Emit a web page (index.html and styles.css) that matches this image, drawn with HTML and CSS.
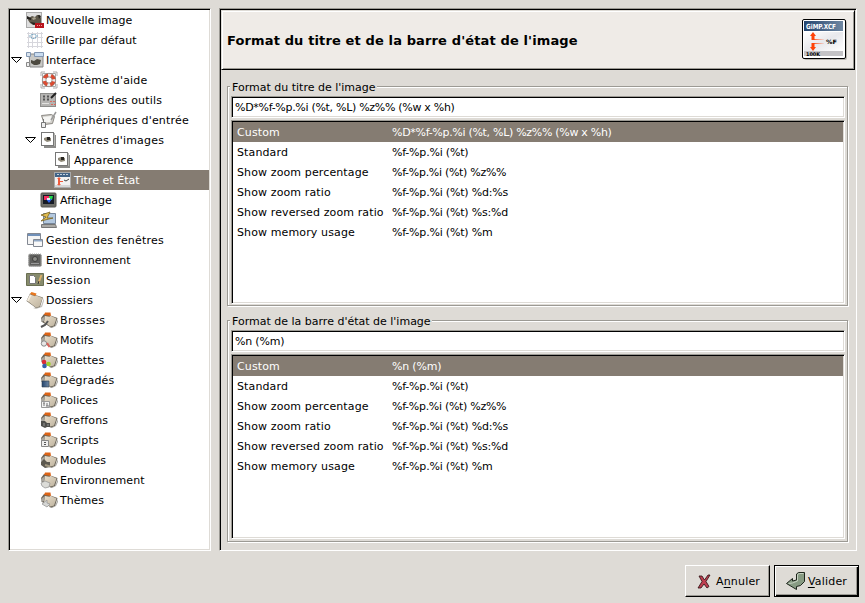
FILE: index.html
```html
<!DOCTYPE html>
<html lang="fr">
<head>
<meta charset="utf-8">
<title>Préférences</title>
<link rel="stylesheet" href="styles.css">
</head>
<body>
<svg class="defs" aria-hidden="true">
  <defs>
    <linearGradient id="paper" x1="0" y1="0" x2="1" y2="1"><stop offset="0" stop-color="#e9dfcc"/><stop offset="1" stop-color="#bdb29e"/></linearGradient>
    <linearGradient id="bar" x1="0" y1="0" x2="1" y2="0"><stop offset="0" stop-color="#24456f"/><stop offset="1" stop-color="#6f87a2"/></linearGradient>
    <linearGradient id="glass" x1="0" y1="0" x2="1" y2="1"><stop offset="0" stop-color="#fff"/><stop offset=".5" stop-color="#e8e8ec"/><stop offset="1" stop-color="#fff"/></linearGradient>
    <linearGradient id="fade" x1="0" y1="0" x2="1" y2="0"><stop offset="0" stop-color="#ff4208"/><stop offset="1" stop-color="#ff4208" stop-opacity=".1"/></linearGradient>
    <symbol id="folder" viewBox="0 0 18 18">
      <path d="M7 17l8-2 3-8v3l-2 6-6 2z" fill="#8a867e" opacity=".5"/>
      <path d="M.5 10L4 2.500l4 1 9 3-3 9.500-4 1z" fill="#7c7567"/>
      <path d="M4 3l1.500-2 5 1.500-1 2.500z" fill="#e8781f"/>
      <path d="M1 9.500L4 3.500l5 1.700 1-.7 6.500 2.500-3 8.500-3.500 1z" fill="url(#paper)"/>
      <path d="M1 9.500L4 3.500l1.500.7-3 6z" fill="#f6efe2"/>
    </symbol>
    <symbol id="sub" viewBox="0 0 18 18">
      <path d="M9 17l6-2 3-7v3l-2 4-4 2z" fill="#77736c" opacity=".6"/>
      <path d="M1 7l3-4 5 1 8.500 3L15 15l-4 1.500L2 11z" fill="#6a6458"/>
      <path d="M4 4l1-2.500 5.500 0 .5 3.500z" fill="#dd6417"/>
      <path d="M5 5l4.500.8 1-1 6 2.700-2.500 7-3.500 1L4 11z" fill="url(#paper)"/>
      <path d="M1.500 7.500L5 5l-1 5-3 1z" fill="#a9a69f"/>
    </symbol>
    <symbol id="wilber" viewBox="0 0 18 18">
      <rect x=".5" y="1.500" width="15" height="15" fill="#dedede" stroke="#aaa"/>
      <path d="M3 7l3-2 3 1 2-2h3l1 3v5l-3 2H7l-3-2-2-3z" fill="#5d5749"/>
      <path d="M1 5l4 2v2L1 8zM12 4l3 1-2 3zM4 11l6 1-2 2z" fill="#25231f"/><path d="M6 7l3-1 1 2-3 1z" fill="#a9a28f"/>
    </symbol>
    <symbol id="images" viewBox="0 0 18 18">
      <path d="M4 4h12v13H4z" fill="#8b8b89"/><path d="M3 2h12v13H3z" fill="#b5b5b1"/>
      <rect x="1.500" y="1.500" width="12" height="13" fill="#fff" stroke="#777"/>
      <path d="M4 7l3-1 4 1v3L7 11 4 9z" fill="#8e8878"/><path d="M7 6h3v3H7z" fill="#282622"/>
    </symbol>
    <symbol id="titre" viewBox="0 0 18 18">
      <rect x=".5" y="1.500" width="16" height="15" fill="#f2f2f2" stroke="#aaa"/>
      <path d="M1 2h15v4H1z" fill="#426487"/><path d="M3 3.500h2m1 0h2m1 0h2m1 0h2" stroke="#c3d0dd"/>
      <path d="M5 6l2 2H6v2h3v1H6v2h1l-2 2-2-2h1V8H3z" fill="#ef5a3b"/><path d="M10 9l2 1 3-2" stroke="#444" fill="none"/><path d="M1 15h15" stroke="#bbb"/>
    </symbol>
  </defs>
</svg>
<main class="dialog">
  <div class="content">
    <nav class="tree">
      <div class="row l1"><svg class="icon" viewBox="0 0 18 18"><use href="#wilber"/><path d="M9 12h9v5H9z" fill="#b8141c"/><path d="M11 14.500h5" stroke="#f19a9a" stroke-dasharray="1 1"/></svg><span>Nouvelle image</span></div>
      <div class="row l1"><svg class="icon" viewBox="0 0 18 18"><path d="M1 2.500h16M1 6.500h16M1 11.500h16M1 15.500h16M2.500 1v16M6.500 1v16M11.500 1v16M15.500 1v16" stroke="#d6d6dc" fill="none"/><path d="M5.500 3.500h4v4h-4zM4 4v3M11 4v3" fill="none" stroke="#7fa9c2" stroke-dasharray="2 1"/></svg><span>Grille par défaut</span></div>
      <div class="row l1"><i class="arrow"><svg viewBox="0 0 11 7"><path d="M.5.500h10L5.500 5.500z"/></svg></i><svg class="icon" viewBox="0 0 18 18"><path d="M3 3h14v13H4z" fill="#c8c8c5" stroke="#888"/><path d="M8.500 1.500h9v4h-9z" fill="#c9dcf0" stroke="#8196b2"/><path d="M.5 1.500h4v4h-4z" fill="#dae4ee" stroke="#8196b2"/><path d="M5 9l3 1 3-2 4 1-1 4-3 1H8l-3-2z" fill="#4d4a40"/><path d="M.5 11.500h3v4h-3z" fill="#eee" stroke="#888"/></svg><span>Interface</span></div>
      <div class="row l2 wide"><svg class="icon" viewBox="0 0 18 18"><path d="M2.500 2.500h13v13h-13z" fill="none" stroke="#aaa"/><circle cx="9" cy="9" r="4.900" fill="none" stroke="#eee" stroke-width="3.600"/><circle cx="9" cy="9" r="4.900" fill="none" stroke="#dd4a30" stroke-width="3.600" stroke-dasharray="4.700 3" stroke-dashoffset="-1.500"/><path d="M1 1h4M1 1v4M13 1h4v4M1 13v4h4M13 17h4v-4" fill="none" stroke="#999" stroke-width=".8"/><circle cx="9" cy="9" r="6.700" fill="none" stroke="#84756e" stroke-width=".7"/><circle cx="9" cy="9" r="3.100" fill="none" stroke="#84756e" stroke-width=".7"/></svg><span>Système d'aide</span></div>
      <div class="row l2 wide"><svg class="icon" viewBox="0 0 18 18"><rect x=".5" y="2.500" width="15" height="13" fill="#b5b4b2" stroke="#8d8d8b"/><path d="M3 5.500h2m2 0h2M3 8.500h2m2 0h2" stroke="#555" stroke-width="2"/><path d="M2 12.500h7" stroke="#e2e2e0"/><path d="M11 7l5-5" stroke="#222" stroke-width="2"/><path d="M10 10.500h5M11 13.500h5" stroke="#d56c61" stroke-dasharray="2 1"/></svg><span>Options des outils</span></div>
      <div class="row l2 wide"><svg class="icon" viewBox="0 0 18 18"><path d="M1.500 4.500l10-1 3 2-2 7-8 1z" fill="#d3d1cc" stroke="#8b8883"/><path d="M3 6l8-1 1 2-2 4H4z" fill="#f5f5f3"/><path d="M16 1l-5 8" stroke="#999" stroke-width="1.500"/><path d="M1.500 11.500h4v5h-4zM3.500 11V8" fill="#eee" stroke="#777"/></svg><span>Périphériques d'entrée</span></div>
      <div class="row l2 wide"><i class="arrow"><svg viewBox="0 0 11 7"><path d="M.5.500h10L5.500 5.500z"/></svg></i><svg class="icon"><use href="#images"/></svg><span>Fenêtres d'images</span></div>
      <div class="row l3"><svg class="icon"><use href="#images"/></svg><span>Apparence</span></div>
      <div class="row l3 selected"><svg class="icon"><use href="#titre"/></svg><span>Titre et État</span></div>
      <div class="row l2"><svg class="icon" viewBox="0 0 18 18"><rect x="1" y="2" width="15" height="14" rx="1" fill="#6d6d66" stroke="#55554f"/><path d="M3 4h11v9H3z" fill="#161b25"/><path d="M4 5h5v4H4z" fill="#f42c5c"/><path d="M9 5h4l-1 4H9z" fill="#22d84b"/><path d="M6 8h6l-3 4z" fill="#2c61ee"/><path d="M7 7h3v2H7z" fill="#e8e8f5"/></svg><span>Affichage</span></div>
      <div class="row l2"><svg class="icon" viewBox="0 0 18 18"><path d="M3.500 2.500h12v10h-12z" fill="#b3c8df" stroke="#77879b"/><path d="M1.500 13.500h14l1 3h-15z" fill="#aaa9a5" stroke="#777"/><path d="M1 4l9-3-3 6h6L1 10l5-4z" fill="#e2bd50" stroke="#776222" stroke-width=".8"/></svg><span>Moniteur</span></div>
      <div class="row l1 wide"><svg class="icon" viewBox="0 0 18 18"><path d="M1.500 2.500h13v11h-13z" fill="#f5f5f5" stroke="#838892"/><path d="M2 3h12v2H2z" fill="#7191ba"/><path d="M7.500 8.500h9v7h-9z" fill="#f8f8f8" stroke="#838892"/><path d="M8 9h8v1.500H8z" fill="#91a8c5"/></svg><span>Gestion des fenêtres</span></div>
      <div class="row l1"><svg class="icon" viewBox="0 0 18 18"><rect x="2.500" y="3" width="13" height="12.500" rx="1.500" fill="#7a7a78" stroke="#a5a5a3" stroke-dasharray="1 1"/><rect x="4" y="4" width="10" height="10" fill="#5f5f5d"/><circle cx="9" cy="8" r="2.500" fill="#8b8b87" stroke="#3e3e3c"/><path d="M5 12.500h8" stroke="#999"/></svg><span>Environnement</span></div>
      <div class="row l1 wider"><svg class="icon" viewBox="0 0 18 18"><path d="M.5 2.500h17v12H.5z" fill="#878b6c" stroke="#6a6f52"/><path d="M3.500 4.500h4l2 2v6h-6z" fill="#fff" stroke="#777"/><path d="M12.500 12l3-8" stroke="#ddb16b" stroke-width="2"/><path d="M12 13l1-3" stroke="#333"/></svg><span>Session</span></div>
      <div class="row l1"><i class="arrow"><svg viewBox="0 0 11 7"><path d="M.5.500h10L5.500 5.500z"/></svg></i><svg class="icon"><use href="#folder"/></svg><span>Dossiers</span></div>
      <div class="row l2 wider"><svg class="icon" viewBox="0 0 18 18"><use href="#sub"/><path d="M1 16l4-2 3-4" stroke="#555" stroke-width="2" fill="none"/></svg><span>Brosses</span></div>
      <div class="row l2"><svg class="icon" viewBox="0 0 18 18"><use href="#sub"/><circle cx="4" cy="12.500" r="2.700" fill="#e6e6e6" stroke="#888"/><path d="M7 12l2.500 4" stroke="#d7635d" stroke-width="2"/></svg><span>Motifs</span></div>
      <div class="row l2"><svg class="icon" viewBox="0 0 18 18"><use href="#sub"/><circle cx="4" cy="11" r="2.300" fill="#dd2c36"/><circle cx="8.500" cy="13" r="2.300" fill="#9fd12c"/><circle cx="4.500" cy="15" r="2.300" fill="#345fa8"/></svg><span>Palettes</span></div>
      <div class="row l2 wide"><svg class="icon" viewBox="0 0 18 18"><use href="#sub"/><path d="M2 10h7v6H2z" fill="url(#bar)" stroke="#34414e" stroke-width=".6"/></svg><span>Dégradés</span></div>
      <div class="row l2"><svg class="icon" viewBox="0 0 18 18"><use href="#sub"/><path d="M1.500 10.500h8v6h-8z" fill="#f3f3f3" stroke="#999"/><path d="M4 12v3m3-3v3M3 12h2m1 3h3" stroke="#777"/></svg><span>Polices</span></div>
      <div class="row l2 wide"><svg class="icon" viewBox="0 0 18 18"><use href="#sub"/><path d="M1 10h4l2 2h3v4H7l-2 1-4-2z" fill="#4f4f4b"/><path d="M4 12v3M8 13v2" stroke="#999"/></svg><span>Greffons</span></div>
      <div class="row l2 wide"><svg class="icon" viewBox="0 0 18 18"><use href="#sub"/><path d="M1.500 9.500h7v6h-7z" fill="#eee" stroke="#888"/><path d="M4 11.500h2M4 13.500h2" stroke="#555"/></svg><span>Scripts</span></div>
      <div class="row l2"><svg class="icon" viewBox="0 0 18 18"><use href="#sub"/><path d="M1 11l3-3 3 3h3v5l-5 1-4-3z" fill="#5d594f"/><path d="M5 14l5 1.500" stroke="#a29880" stroke-width="2"/></svg><span>Modules</span></div>
      <div class="row l2"><svg class="icon" viewBox="0 0 18 18"><use href="#sub"/><path d="M1 12l4-2 5 2-1 4-4 1-3-2z" fill="#dcdcd8" stroke="#999" stroke-width=".8"/></svg><span>Environnement</span></div>
      <div class="row l2"><svg class="icon" viewBox="0 0 18 18"><use href="#sub"/><path d="M2 13l5-4v3l3 1-3 3z" fill="#d5d6d4" stroke="#999" stroke-width=".8"/></svg><span>Thèmes</span></div>
    </nav>
    <section class="page">
      <header class="banner">
        <h1>Format du titre et de la barre d'état de l'image</h1>
        <svg class="logo" viewBox="0 0 46 42">
          <rect x="2" y="2" width="43" height="39" rx="2" fill="#b9b6b0"/>
          <rect x=".5" y=".5" width="43" height="39" rx="1.500" fill="#fff" stroke="#000"/>
          <path d="M2 2h39v10H2z" fill="url(#bar)"/><path d="M2 13h39v19H2z" fill="url(#glass)"/><path d="M2 32h39v5H2z" fill="#c4c3c6"/>
          <path d="M10 20h12v1H10zM10 24h12v1H10z" fill="url(#fade)"/><path d="M11 13l3 4h-1.500v4h-3v-4H8zM11 32l3-4h-1.500v-4h-3v4H8z" fill="#ff4208"/>
          <text class="logo-title" x="4" y="10" textLength="30" lengthAdjust="spacingAndGlyphs">GiMP.XCF</text>
          <text class="logo-code" x="24" y="25" textLength="11" lengthAdjust="spacingAndGlyphs">%F</text>
          <text class="logo-zoom" x="4" y="36.500" textLength="14" lengthAdjust="spacingAndGlyphs">100K</text>
        </svg>
      </header>
      <section class="group first">
        <h2><span>Format du titre de l'image</span></h2>
        <div class="entry"><span class="code long">%D*%f-%p.%i (%t, %L) %z%% (%w x %h)</span></div>
        <div class="list">
          <div class="item selected"><span>Custom</span><span class="code long">%D*%f-%p.%i (%t, %L) %z%% (%w x %h)</span></div>
          <div class="item"><span>Standard</span><span class="code">%f-%p.%i (%t)</span></div>
          <div class="item"><span>Show zoom percentage</span><span class="code long">%f-%p.%i (%t) %z%%</span></div>
          <div class="item"><span>Show zoom ratio</span><span class="code">%f-%p.%i (%t) %d:%s</span></div>
          <div class="item"><span>Show reversed zoom ratio</span><span class="code">%f-%p.%i (%t) %s:%d</span></div>
          <div class="item"><span>Show memory usage</span><span class="code">%f-%p.%i (%t) %m</span></div>
        </div>
      </section>
      <section class="group second">
        <h2><span>Format de la barre d'état de l'image</span></h2>
        <div class="entry"><span class="code">%n (%m)</span></div>
        <div class="list">
          <div class="item selected"><span>Custom</span><span class="code">%n (%m)</span></div>
          <div class="item"><span>Standard</span><span class="code">%f-%p.%i (%t)</span></div>
          <div class="item"><span>Show zoom percentage</span><span class="code long">%f-%p.%i (%t) %z%%</span></div>
          <div class="item"><span>Show zoom ratio</span><span class="code">%f-%p.%i (%t) %d:%s</span></div>
          <div class="item"><span>Show reversed zoom ratio</span><span class="code">%f-%p.%i (%t) %s:%d</span></div>
          <div class="item"><span>Show memory usage</span><span class="code">%f-%p.%i (%t) %m</span></div>
        </div>
      </section>
    </section>
  </div>
  <footer class="actions">
    <button class="btn cancel"><svg viewBox="0 0 14 15"><path d="M2 2l3 0 2.500 4L11 1h2L9 7.500l3 5-2 1.500-3-4-3 4-3 0 4-6.500z" fill="#bd3f50" stroke="#2b0c10" stroke-width=".8"/></svg><span>A<u>n</u>nuler</span></button>
    <button class="btn ok"><svg viewBox="0 0 20 18"><path d="M10.500 2l2-1.500h6v9l-4 4-4 1v3L.5 11.500l6-5v2.500l4-1z" fill="#879b83" stroke="#1d251c"/><path d="M11.500 2.500v6.500l-5 2-4 .5M11.500 2.500l2-1h4" fill="none" stroke="#c6d1c2"/></svg><span><u>V</u>alider</span></button>
  </footer>
</main>
</body>
</html>
```
FILE: styles.css
```css
* { box-sizing: border-box; }
body {
  margin: 0;
  background: #dedbd6;
  color: #000;
  font: 11px/20px "DejaVu Sans", sans-serif;
}
.defs { position: absolute; width: 0; height: 0; }
.dialog {
  display: flex;
  flex-direction: column;
  width: 865px;
  height: 603px;
  padding: 8px 6px 6px 8px;
  white-space: nowrap;
}
.content { display: flex; gap: 8px; height: 543px; }

.tree, .entry, .list {
  background: #fff;
  border: 1px solid;
  border-color: #9c9a94 #fff #fff #9c9a94;
  box-shadow: inset 1px 1px #000, inset -1px -1px #dedbd6;
}
.tree { width: 203px; padding: 1px; }
.row { display: flex; align-items: center; height: 20px; letter-spacing: .04px; }
.row span, .btn span { padding-top: 2px; }
.wide { letter-spacing: .19px; }
.wider { letter-spacing: .42px; }
.l1 { padding-left: 16px; }
.l2 { padding-left: 30px; }
.l3 { padding-left: 44px; }
.icon { width: 18px; height: 18px; margin-right: 2px; flex: none; }
.arrow { width: 11px; height: 7px; margin: 0 4px 0 -15px; flex: none; display: flex; }
.arrow svg { width: 11px; height: 7px; fill: #fff; stroke: #000; }
.selected { background: #857c72; color: #fff; }

.page {
  width: 638px;
  border: 1px solid;
  border-color: #9c9a94 #fff #fff #9c9a94;
  box-shadow: inset 1px 1px #000;
  padding: 1px;
}
.banner {
  display: flex;
  align-items: center;
  justify-content: space-between;
  height: 60px;
  width: 634px;
  padding: 0 6px 0 5px;
  background: #efebe7;
  border: 1px solid;
  border-color: #dedbd6 #000 #000 #dedbd6;
  box-shadow: inset 1px 1px #fff, inset -1px -1px #9c9a94;
}
h1 { margin: 1px 0 0; font-size: 13px; line-height: 20px; letter-spacing: .13px; }
.logo { width: 46px; height: 42px; }
.logo text { font-family: "DejaVu Sans", sans-serif; font-weight: bold; }
.logo-title { font-size: 7px; fill: #fff; }
.logo-code { font-size: 6px; }
.logo-zoom { font-size: 5px; }

.group {
  width: 621px;
  margin-left: 6px;
  padding: 0 3px;
  border: 1px solid #9c9a94;
  box-shadow: 1px 1px #fff, inset 1px 1px #fff;
}
.first { height: 220px; margin-top: 16px; }
.second { height: 222px; margin-top: 14px; }
h2 { margin: -9px 0 0 -1px; height: 18px; font-size: 11px; font-weight: normal; line-height: 20px; }
h2 span { display: inline-block; height: 18px; padding: 0 1px 0 2px; background: #dedbd6; }
.entry { width: 614px; height: 22px; padding: 1px 3px 0; }
.entry span { display: block; height: 20px; }
.list { width: 614px; margin-top: 2px; padding: 1px; }
.first .list { height: 184px; }
.second .list { height: 185px; }
.item { display: grid; grid-template-columns: 155px 1fr; height: 20px; padding-left: 4px; letter-spacing: .12px; }
.item span { padding-top: 1px; height: 20px; }
.code { letter-spacing: -.2px; }
.long { letter-spacing: -.3px; }

.actions { display: flex; justify-content: flex-end; gap: 4px; margin-top: 14px; }
.btn {
  display: flex;
  align-items: center;
  justify-content: center;
  width: 85px;
  height: 32px;
  padding: 0;
  border: 1px solid;
  border-color: #fff #000 #000 #fff;
  box-shadow: inset -1px -1px #9c9a94;
  background: #dedbd6;
  font: inherit;
  letter-spacing: .2px;
}
.cancel { padding-left: 2px; }
.cancel svg { width: 14px; height: 15px; margin-right: 5px; }
.ok { border-color: #000; box-shadow: inset 1px 1px #fff, inset -1px -1px #000, inset -2px -2px #9c9a94; }
.ok svg { width: 20px; height: 18px; margin-right: 2px; }
u { text-underline-offset: 2px; }
```
